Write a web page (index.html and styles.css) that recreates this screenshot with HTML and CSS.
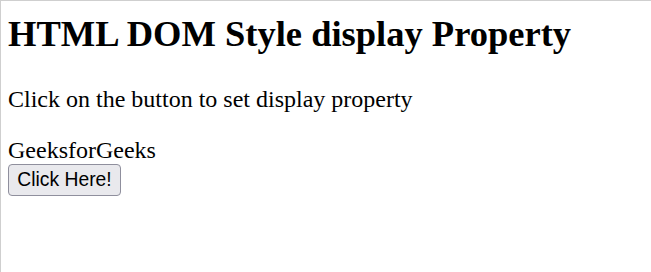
FILE: index.html
```html
<!DOCTYPE html>
<html>
<head>
<meta charset="utf-8">
<title>HTML DOM Style display Property</title>
<link rel="stylesheet" href="styles.css">
</head>
<body>
<h1 class="title">HTML DOM Style display Property</h1>
<p class="intro">Click on the button to set display property</p>
<div class="gfg">GeeksforGeeks</div>
<button class="btn" type="button">Click Here!</button>
</body>
</html>
```
FILE: styles.css
```css
html {
  border-top: 1px solid #cfcfcf;
  border-left: 1px solid #cfcfcf;
  min-height: 100%;
  box-sizing: border-box;
  background: #fff;
}
body {
  margin: 0;
  padding: 8px 7px;
  font-family: "Liberation Serif", "Times New Roman", serif;
  font-size: 24px;
  color: #000;
}
.title {
  font-size: 36.5px;
  font-weight: bold;
  margin: 4px 0 30px;
  line-height: 42px;
}
.intro {
  margin: 0 0 23px;
  line-height: 28px;
}
.gfg {
  line-height: 28px;
}
.btn {
  display: block;
  font-family: "Liberation Sans", Arial, sans-serif;
  font-size: 19.3px;
  color: #000;
  background: #e9e9ed;
  border: 1px solid #8f8f9d;
  border-radius: 4px;
  padding: 0 8px;
  margin: 0;
  height: 32px;
  width: 113px;
}
```
